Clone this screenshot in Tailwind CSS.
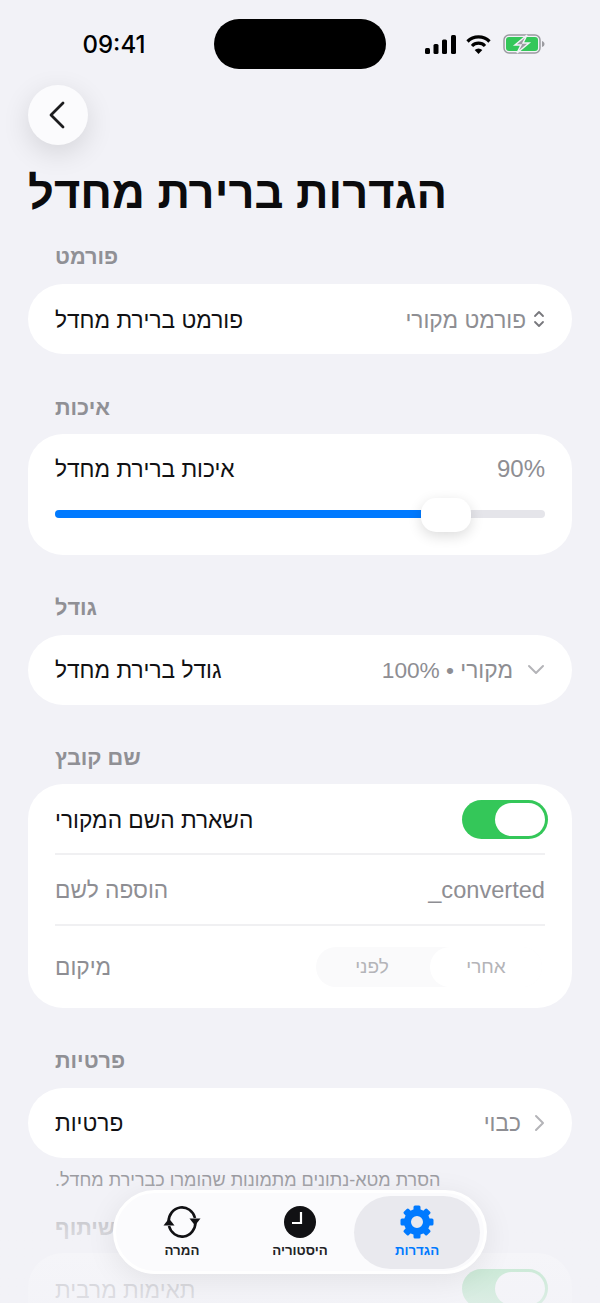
<!DOCTYPE html>
<html>

<head>
  <title>Settings</title>
  <script src="https://cdn.jsdelivr.net/npm/@tailwindcss/browser@4"></script>
</head>

<body class="m-0 p-0">
  <div class="relative w-[600px] h-[1303px] overflow-hidden bg-[#f2f2f7] font-['Liberation_Sans',sans-serif] text-[#111114]">
    <!-- Status bar -->
    <div class="h-[85px] relative flex items-start">
      <div class="w-[214px] h-[90px] flex justify-center pl-[14px] pt-[29px] text-[24px] leading-[32px] font-medium font-['Inter',sans-serif] text-black">09:41</div>
      <div class="mt-[19px] w-[172px] h-[50px] rounded-full bg-black"></div>
      <div class="flex items-center gap-[10px] ml-[39px] mt-[34px]">
        <svg width="31" height="19" viewBox="0 0 31 19" fill="#000">
          <rect x="0" y="13" width="5" height="6" rx="1.5" />
          <rect x="8.500" y="9" width="5" height="10" rx="1.5" />
          <rect x="17" y="4.500" width="5" height="14.500" rx="1.5" />
          <rect x="26" y="0" width="5" height="19" rx="1.5" />
        </svg>
        <svg width="25" height="19" viewBox="0 0 25 19" fill="none" stroke="#000" stroke-width="3.200">
          <path d="M1.500 6.500a15.500 15.500 0 0 1 22 0" />
          <path d="M6 11a9 9 0 0 1 13 0" />
          <path d="M12.500 19l-3.800-4a5.500 5.500 0 0 1 7.600 0z" fill="#000" stroke="none" />
        </svg>
        <svg width="42" height="20" viewBox="0 0 42 20" class="ml-[2px]">
          <rect x="1" y="1" width="36" height="18" rx="5" fill="none" stroke="#9b9ba0" stroke-width="1.500" />
          <rect x="3" y="3" width="32" height="14" rx="3" fill="#34c759" />
          <path d="M39 7v6c1.500-.5 2.500-1.500 2.500-3s-1-2.500-2.500-3z" fill="#9b9ba0" />
          <path d="M24 1l-12 10h6l-4 8 12-10h-6z" fill="#9b9ba0" stroke="#f2f2f7" stroke-width="1.500" />
        </svg>
      </div>
    </div>

    <!-- Back -->
    <div class="px-[28px]">
      <button class="w-[60px] h-[60px] rounded-full bg-[#fbfbfd] flex items-center justify-center shadow-[0_8px_28px_rgba(0,0,0,0.12)]">
        <svg width="20" height="28" viewBox="0 0 20 28" fill="none" stroke="#1c1c1e" stroke-width="2.800" stroke-linecap="round" stroke-linejoin="round">
          <path d="M15 2L3 14l12 12" />
        </svg>
      </button>
    </div>

    <h1 class="h-[95px] px-[28px] flex items-center text-[45.3px] font-bold leading-none text-[#0b0b0d]">הגדרות ברירת מחדל</h1>

    <!-- Format -->
    <div class="px-[28px]">
      <h2 class="h-[34px] px-[27px] flex items-center text-[21.7px] font-bold text-[#909095] mb-[10px]">פורמט</h2>
      <div class="h-[70px] rounded-[35px] bg-white px-[27px] flex items-center justify-between">
        <span class="text-[22.7px] mt-[2px]">פורמט ברירת מחדל</span>
        <div class="flex items-center gap-[7px] text-[#8e8e93]">
          <span class="text-[22.7px] mt-[2px]">פורמט מקורי</span>
          <svg width="12" height="18" viewBox="0 0 12 18" fill="none" stroke="#77777c" stroke-width="1.800" stroke-linecap="round" stroke-linejoin="round">
            <path d="M2 6l4-4 4 4M2 12l4 4 4-4" />
          </svg>
        </div>
      </div>
    </div>

    <!-- Quality -->
    <div class="px-[28px] mt-[36px]">
      <h2 class="h-[34px] px-[27px] pt-[2px] flex items-center text-[21.7px] font-bold text-[#909095] mb-[10px]">איכות</h2>
      <div class="h-[121px] rounded-[35px] bg-white px-[27px] pt-[18px]">
        <div class="flex items-center justify-between h-[34px]">
          <span class="text-[22.7px]">איכות ברירת מחדל</span>
          <span class="text-[24px] text-[#8e8e93]">90%</span>
        </div>
        <div class="relative h-[8px] mt-[24px] rounded-full bg-[#e5e5ea]">
          <div class="h-full w-[366px] rounded-l-full bg-[#007aff]"></div>
          <div class="absolute left-[366px] top-[-12px] w-[50px] h-[34px] rounded-[15px] bg-white shadow-[0_4px_14px_rgba(0,0,0,0.14)]"></div>
        </div>
      </div>
    </div>

    <!-- Size -->
    <div class="px-[28px] mt-[35px]">
      <h2 class="h-[34px] px-[27px] pt-[2px] flex items-center text-[21.7px] font-bold text-[#909095] mb-[11px]">גודל</h2>
      <div class="h-[70px] rounded-[35px] bg-white px-[27px] flex items-center justify-between">
        <span class="text-[22.7px]">גודל ברירת מחדל</span>
        <div class="flex items-center gap-[14px] text-[#8e8e93]">
          <span dir="rtl" class="text-[22.7px]">מקורי • 100%</span>
          <svg width="18" height="12" viewBox="0 0 18 12" fill="none" stroke="#b4b4b8" stroke-width="2" stroke-linecap="round" stroke-linejoin="round">
            <path d="M2 2l7 7 7-7" />
          </svg>
        </div>
      </div>
    </div>

    <!-- File name -->
    <div class="px-[28px] mt-[35px]">
      <h2 class="h-[34px] px-[27px] pt-[2px] flex items-center text-[21.7px] font-bold text-[#909095] mb-[10px]">שם קובץ</h2>
      <div class="h-[224px] rounded-[35px] bg-white px-[27px]">
        <div class="h-[71px] pt-[2px] flex items-center justify-between border-b-2 border-[#f0f0f2]">
          <span class="text-[22.7px] mt-[2px]">השארת השם המקורי</span>
          <div class="w-[86px] h-[39px] -mr-[3px] rounded-full bg-[#34c759] p-[3px] flex justify-end">
            <div class="w-[50px] h-full rounded-full bg-white"></div>
          </div>
        </div>
        <div class="h-[71px] flex items-center justify-between border-b-2 border-[#f0f0f2]">
          <span class="text-[22.7px] mt-[2px] text-[#8e8e93]">הוספה לשם</span>
          <span class="text-[23.6px] mt-[2px] text-[#8e8e93]">_converted</span>
        </div>
        <div class="h-[82px] flex items-center justify-between">
          <span class="text-[22.7px] text-[#8e8e93]">מיקום</span>
          <div class="w-[226px] h-[40px] mr-[3px] rounded-[20px] bg-[#fafafb] flex text-[19px] text-[#b4b4b8]">
            <div class="w-[114px] pr-[2px] flex items-center justify-center">לפני</div>
            <div class="w-[112px] rounded-[20px] bg-white flex items-center justify-center">אחרי</div>
          </div>
        </div>
      </div>
    </div>

    <!-- Privacy -->
    <div class="px-[28px] mt-[35px]">
      <h2 class="h-[34px] px-[27px] pt-[2px] flex items-center text-[21.7px] font-bold text-[#909095] mb-[11px]">פרטיות</h2>
      <div class="h-[70px] rounded-[35px] bg-white px-[27px] flex items-center justify-between">
        <span class="text-[22.7px]">פרטיות</span>
        <div class="flex items-center gap-[12px] text-[#8e8e93]">
          <span class="text-[22.7px]">כבוי</span>
          <svg width="12" height="18" viewBox="0 0 12 18" fill="none" stroke="#b4b4b8" stroke-width="2" stroke-linecap="round" stroke-linejoin="round">
            <path d="M3 2l7 7-7 7" />
          </svg>
        </div>
      </div>
      <p dir="rtl" class="w-fit ml-[27px] mt-[11px] text-[18px] leading-[22px] text-[#8e8e93]">הסרת מטא-נתונים מתמונות שהומרו כברירת מחדל.</p>
    </div>

    <!-- Sharing -->
    <div class="px-[28px] mt-[18px]">
      <h2 class="h-[34px] px-[27px] pt-[4px] flex items-center text-[21.7px] font-bold text-[#909095] mb-[10px]">שיתוף</h2>
      <div class="h-[70px] rounded-t-[35px] bg-white px-[27px] flex items-center justify-between">
        <span class="text-[22.7px] mt-[5px] text-[#55555a]">תאימות מרבית</span>
        <div class="w-[86px] h-[39px] -mr-[3px] rounded-full bg-[#34c759] p-[3px] flex justify-end">
          <div class="w-[50px] h-full rounded-full bg-white"></div>
        </div>
      </div>
    </div>

    <!-- Fade under the tab bar -->
    <div class="absolute left-0 right-0 bottom-0 h-[140px] bg-linear-to-b from-[#f2f2f7]/0 via-[#f2f2f7]/72 to-[#f2f2f7]/88"></div>

    <!-- Tab bar -->
    <div class="absolute left-[113px] top-[1190px] w-[374px] h-[84px] rounded-full bg-[#fbfbfd] border-[3px] border-white shadow-[0_6px_30px_rgba(0,0,0,0.08)] flex items-center pl-[2px] pr-[4px]">
      <div class="w-[130px] h-[73px] flex flex-col items-center justify-center gap-[4px]">
        <svg width="40" height="34" viewBox="0 0 40 34" fill="none" stroke="#111114" stroke-width="2.600">
          <path d="M6.500 17A13.500 14.500 0 0 1 33 13" />
          <path d="M33.500 17A13.500 14.500 0 0 1 7 21" />
          <path d="M27.500 13.500h11l-5.500 7z" fill="#111114" stroke="none" />
          <path d="M12.500 20.500h-11l5.500-7z" fill="#111114" stroke="none" />
        </svg>
        <span class="text-[13.3px] leading-[16px] font-bold text-[#222225]">המרה</span>
      </div>
      <div class="w-[110px] h-[73px] flex flex-col items-center justify-center gap-[4px]">
        <svg width="34" height="34" viewBox="0 0 34 34">
          <circle cx="17" cy="17" r="16" fill="#111114" />
          <path d="M18 7v11h-9" fill="none" stroke="#fff" stroke-width="2.200" />
        </svg>
        <span class="text-[13.3px] leading-[16px] font-bold text-[#222225]">היסטוריה</span>
      </div>
      <div class="w-[128px] h-[73px] rounded-full bg-[#e9e9ee] flex flex-col items-center justify-center gap-[4px] text-[#007aff]">
        <svg width="34" height="34" viewBox="0 0 34 34" fill="#007aff">
          <circle cx="17" cy="17" r="9.500" fill="none" stroke="#007aff" stroke-width="7" />
          <g>
            <rect x="13.500" y="0.500" width="7" height="7" rx="1.500" />
            <rect x="13.500" y="26.500" width="7" height="7" rx="1.500" />
            <rect x="0.500" y="13.500" width="7" height="7" rx="1.500" />
            <rect x="26.500" y="13.500" width="7" height="7" rx="1.500" />
            <rect x="13.500" y="0.500" width="7" height="7" rx="1.500" transform="rotate(45 17 17)" />
            <rect x="13.500" y="26.500" width="7" height="7" rx="1.500" transform="rotate(45 17 17)" />
            <rect x="0.500" y="13.500" width="7" height="7" rx="1.500" transform="rotate(45 17 17)" />
            <rect x="26.500" y="13.500" width="7" height="7" rx="1.500" transform="rotate(45 17 17)" />
          </g>
        </svg>
        <span class="text-[13.3px] leading-[16px] font-bold">הגדרות</span>
      </div>
    </div>
  </div>
</body>

</html>
